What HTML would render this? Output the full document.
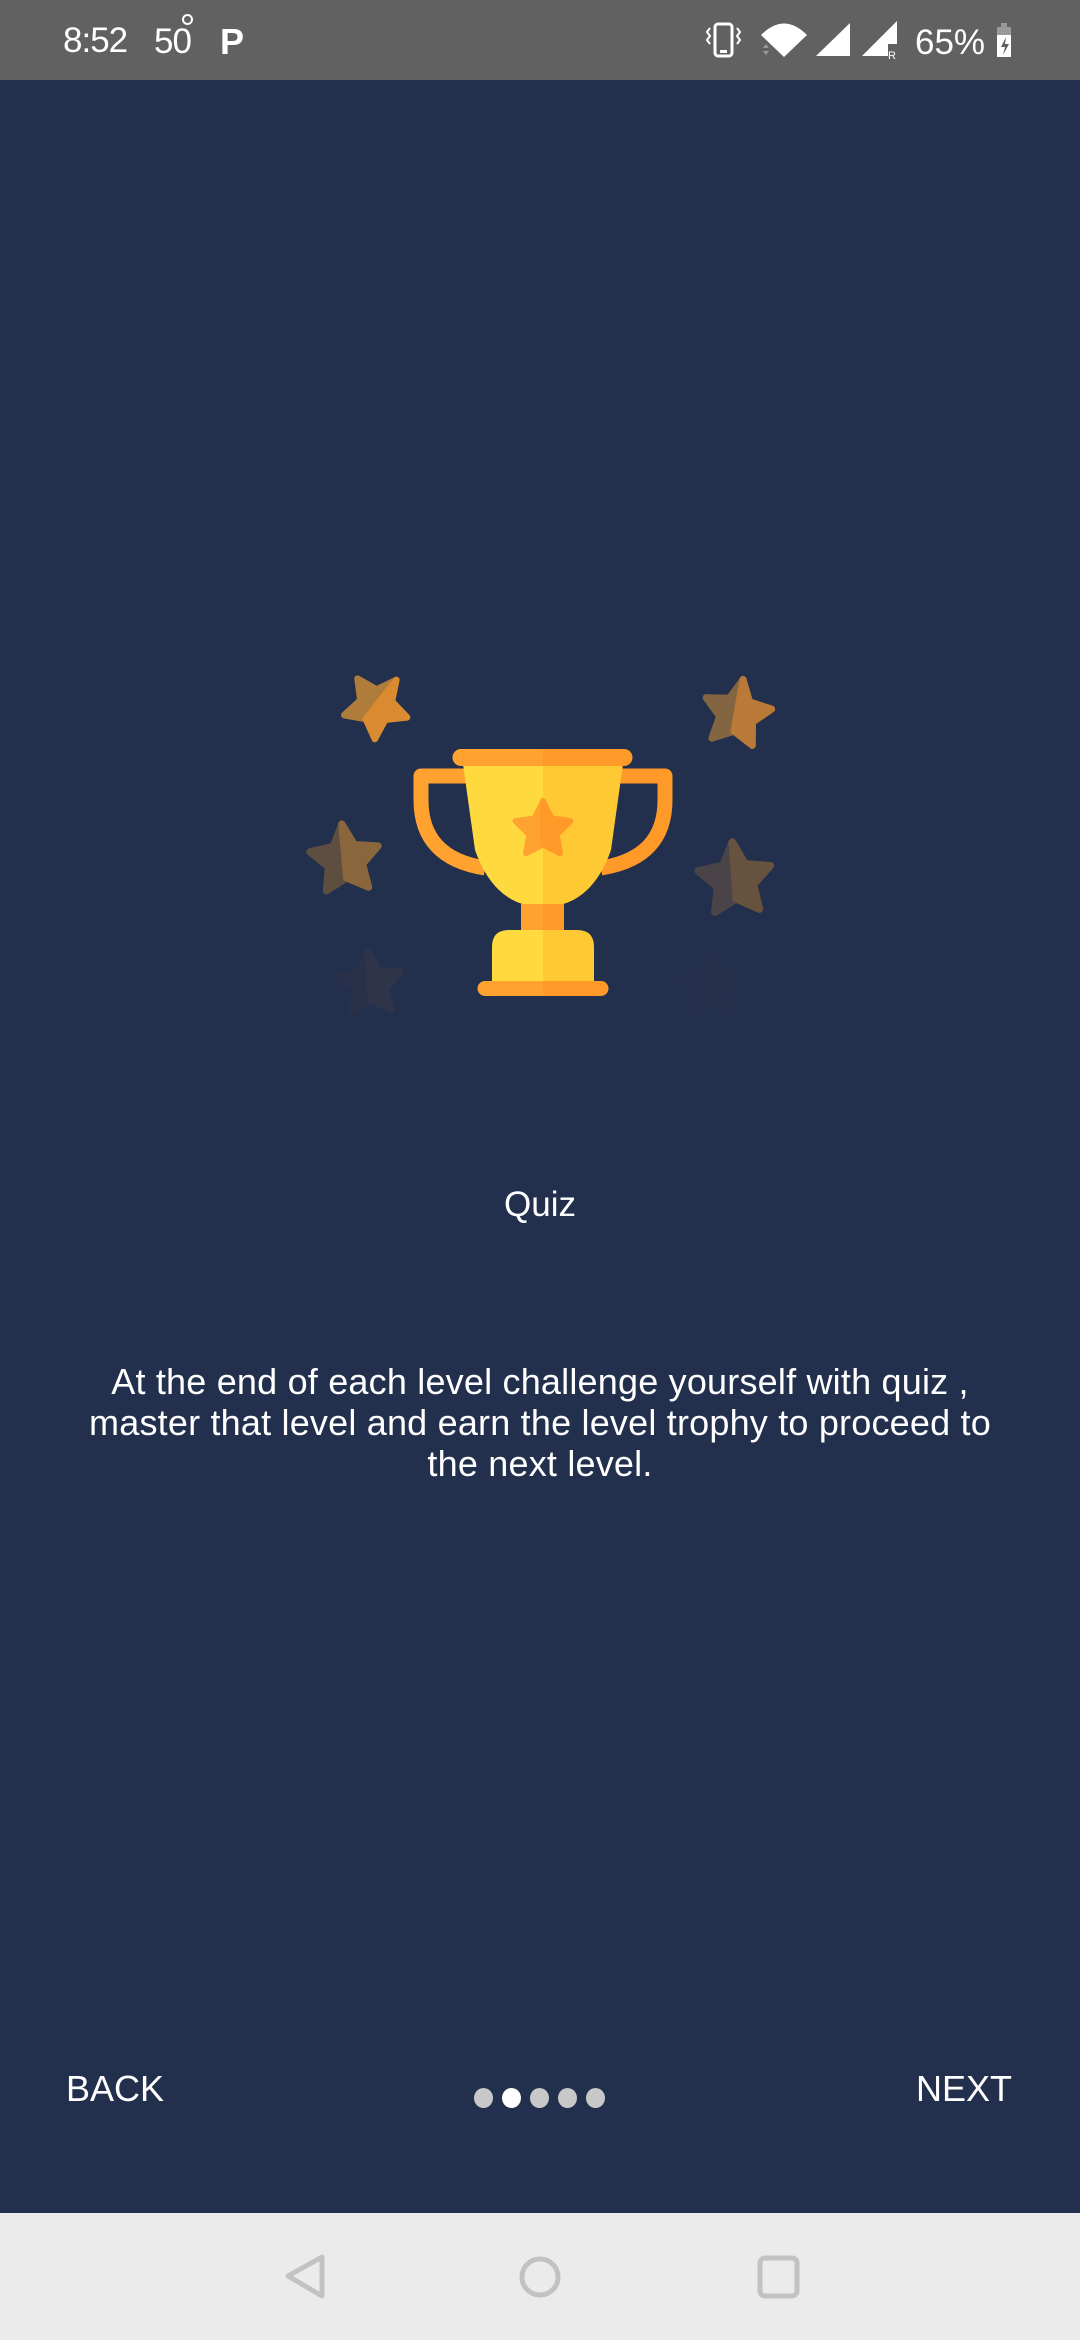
<!DOCTYPE html>
<html><head><meta charset="utf-8"><style>
html,body{margin:0;padding:0}
body{width:1080px;height:2340px;background:#222F4D;position:relative;overflow:hidden;font-family:"Liberation Sans",sans-serif;color:#fff}
.sb{position:absolute;left:0;top:0;width:1080px;height:80px;background:#616161}
.t{position:absolute;white-space:nowrap}
.nav{position:absolute;left:0;top:2213px;width:1080px;bottom:0;background:#EBEBEB}
.nav svg{display:block}
.dot{position:absolute;top:2088px;width:19px;height:20px;border-radius:50%;background:#C8C8C8}
</style></head><body>
<div class="sb">
  <div class="t" style="left:63px;top:21px;font-size:35px;letter-spacing:-1px">8:52</div>
  <div class="t" style="left:154px;top:22px;font-size:35px;letter-spacing:-1px">50</div>
  <div class="t" style="left:182px;top:14px;width:7px;height:7px;border:2px solid #fff;border-radius:50%"></div>
  <div class="t" style="left:220px;top:21px;font-size:36px;font-weight:bold">P</div>
  <svg class="t" style="left:700px;top:18px" width="320" height="45" viewBox="700 18 320 45">
    <rect x="715" y="24" width="17" height="32" rx="3" fill="none" stroke="#fff" stroke-width="3"/>
    <rect x="720" y="50" width="7" height="3" fill="#fff"/>
    <path d="M710 28l-3 4 3 4-3 4 3 4M737 28l3 4-3 4 3 4-3 4" stroke="#fff" stroke-width="2" fill="none"/>
    <path d="M761 35 Q784 12 807 35 L784 57Z" fill="#fff"/>
    <path d="M763 48l3-4 3 4zM763 51l3 4 3-4z" fill="#999"/>
    <path d="M816 56 L850 23 L850 56Z" fill="#fff"/>
    <path d="M862 56 L897 21 L897 44 L888 44 L888 56Z" fill="#fff"/>
    <text x="888" y="59" font-size="11" fill="#fff" font-family="Liberation Sans">R</text>
    <text x="915" y="54" font-size="35" fill="#fff" font-family="Liberation Sans">65%</text>
    <rect x="997" y="27" width="14" height="30" fill="#fff"/>
    <rect x="997" y="27" width="14" height="8" fill="#999"/>
    <rect x="1001" y="23" width="6" height="4" fill="#999"/>
    <path d="M1006 37l-5 10h4l-2 8 6-11h-4z" fill="#616161"/>
  </svg>
</div>

<svg class="t" style="left:0;top:600px" width="1080" height="450" viewBox="0 600 1080 450">
  <defs>
    <polygon id="sl" points="0,-1 0,0.5 -0.588,0.809 -0.476,0.155 -0.951,-0.309 -0.294,-0.405"/>
    <polygon id="sr" points="0,-1 0,0.5 0.588,0.809 0.476,0.155 0.951,-0.309 0.294,-0.405"/>
  </defs>
  <g stroke-linejoin="round" stroke-width="0.2">
  <g transform="translate(376,706) rotate(38) scale(33)"><use href="#sl" fill="#AF7C3C" stroke="#AF7C3C"/><use href="#sr" fill="#DA8B30" stroke="#DA8B30"/></g>
  <g transform="translate(737,714) rotate(10) scale(35)"><use href="#sl" fill="#836641" stroke="#836641"/><use href="#sr" fill="#B87A36" stroke="#B87A36"/></g>
  <g transform="translate(345,860) rotate(-5) scale(36)"><use href="#sl" fill="#5E4E40" stroke="#5E4E40"/><use href="#sr" fill="#8A663D" stroke="#8A663D"/></g>
  <g transform="translate(735,880) rotate(-4) scale(38)"><use href="#sl" fill="#4A4448" stroke="#4A4448"/><use href="#sr" fill="#675240" stroke="#675240"/></g>
  <g transform="translate(370,984) rotate(-4) scale(33)"><use href="#sl" fill="#29314A" stroke="#29314A"/><use href="#sr" fill="#2F3448" stroke="#2F3448"/></g>
  <g transform="translate(708,986) rotate(-4) scale(31)"><use href="#sl" fill="#242F4B" stroke="#242F4B"/><use href="#sr" fill="#27304A" stroke="#27304A"/></g>
  </g>

  <path d="M470 776 H421 V800 Q421 858 485 868" fill="none" stroke="#FFA230" stroke-width="15" stroke-linejoin="round"/>
  <path d="M616 776 H665 V800 Q665 858 601 868" fill="none" stroke="#FF9A28" stroke-width="15" stroke-linejoin="round"/>
  <path d="M463 764 H543 V907 Q495 907 475 850 Z" fill="#FFDA3E"/>
  <path d="M623 764 H543 V907 Q591 907 611 850 Z" fill="#FFC933"/>
  <rect x="521" y="904" width="22" height="28" fill="#FFA230"/>
  <rect x="543" y="904" width="21" height="28" fill="#FF9A28"/>
  <path d="M492 982 V947 Q492 930 509 930 H543 V982Z" fill="#FFDA3E"/>
  <path d="M594 982 V947 Q594 930 577 930 H543 V982Z" fill="#FFC933"/>
  <path d="M543 749 H461 A8.5 8.5 0 0 0 461 766 H543Z" fill="#FFA230"/>
  <path d="M543 749 H624 A8.5 8.5 0 0 1 624 766 H543Z" fill="#FF9A28"/>
  <path d="M543 981 H485 A7.5 7.5 0 0 0 485 996 H543Z" fill="#FFA230"/>
  <path d="M543 981 H601 A7.5 7.5 0 0 1 601 996 H543Z" fill="#FF9A28"/>
  <g transform="translate(543,830) scale(29)" stroke-linejoin="round" stroke-width="0.2"><use href="#sl" fill="#FFA230" stroke="#FFA230"/><use href="#sr" fill="#FF9A28" stroke="#FF9A28"/></g>
</svg>

<div class="t" style="left:0;width:1080px;text-align:center;top:1185px;font-size:35px">Quiz</div>
<div class="t" style="left:0;width:1080px;text-align:center;top:1361px;font-size:36px;line-height:41px;letter-spacing:0.2px">At the end of each level challenge yourself with quiz ,<br>master that level and earn the level trophy to proceed to<br>the next level.</div>

<div class="t" style="left:66px;top:2068px;font-size:36px">BACK</div>
<div class="t" style="right:68px;top:2068px;font-size:36px">NEXT</div>
<div class="dot" style="left:474px"></div>
<div class="dot" style="left:502px;background:#fff"></div>
<div class="dot" style="left:530px"></div>
<div class="dot" style="left:558px"></div>
<div class="dot" style="left:586px"></div>

<div class="nav">
  <svg width="1080" height="127" viewBox="0 2213 1080 127">
    <path d="M322 2257 V2296 L288 2276Z" fill="none" stroke="#C2C2C2" stroke-width="5" stroke-linejoin="round"/>
    <circle cx="540" cy="2277" r="18" fill="none" stroke="#C2C2C2" stroke-width="5"/>
    <rect x="760" y="2258" width="37" height="38" rx="5" fill="none" stroke="#C2C2C2" stroke-width="5"/>
  </svg>
</div>
</body></html>
